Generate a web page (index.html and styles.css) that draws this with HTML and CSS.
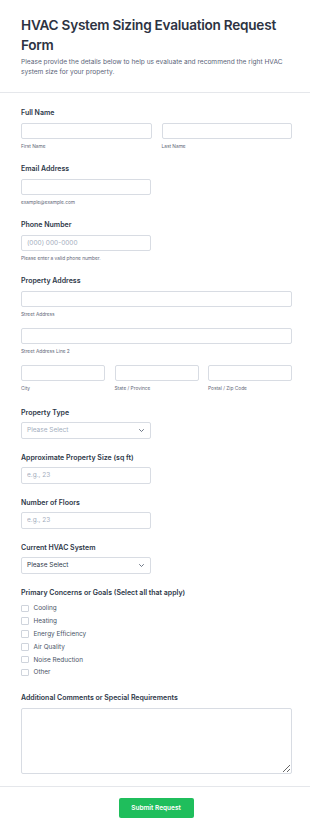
FILE: index.html
```html
<!DOCTYPE html>
<html lang="en">
<head>
<meta charset="utf-8">
<title>HVAC System Sizing Evaluation Request Form</title>
<link rel="stylesheet" href="styles.css">
</head>
<body>
<div class="page">
  <header class="header">
    <h1 class="title">HVAC System Sizing Evaluation Request Form</h1>
    <p class="desc">Please provide the details below to help us evaluate and recommend the right HVAC system size for your property.</p>
  </header>
  <form class="form">
    <div class="field">
      <div class="label">Full Name</div>
      <div class="row two">
        <div class="cell"><input class="input" type="text"><div class="sub">First Name</div></div>
        <div class="cell"><input class="input" type="text"><div class="sub">Last Name</div></div>
      </div>
    </div>
    <div class="field">
      <div class="label">Email Address</div>
      <input class="input half" type="text">
      <div class="sub">example@example.com</div>
    </div>
    <div class="field">
      <div class="label">Phone Number</div>
      <input class="input half" type="text" placeholder="(000) 000-0000">
      <div class="sub">Please enter a valid phone number.</div>
    </div>
    <div class="field address">
      <div class="label">Property Address</div>
      <div class="stack">
        <div class="cell"><input class="input" type="text"><div class="sub">Street Address</div></div>
        <div class="cell"><input class="input" type="text"><div class="sub">Street Address Line 2</div></div>
        <div class="row three">
          <div class="cell"><input class="input" type="text"><div class="sub">City</div></div>
          <div class="cell"><input class="input" type="text"><div class="sub">State / Province</div></div>
          <div class="cell"><input class="input" type="text"><div class="sub">Postal / Zip Code</div></div>
        </div>
      </div>
    </div>
    <div class="field">
      <div class="label">Property Type</div>
      <div class="select half placeholder"><span>Please Select</span>
        <svg class="chev" viewBox="0 0 10 6" width="5" height="3"><path d="M1 1l4 4 4-4" fill="none" stroke="#4a5568" stroke-width="1.6" stroke-linecap="round" stroke-linejoin="round"/></svg>
      </div>
    </div>
    <div class="field">
      <div class="label">Approximate Property Size (sq ft)</div>
      <input class="input half" type="text" placeholder="e.g., 23">
    </div>
    <div class="field">
      <div class="label">Number of Floors</div>
      <input class="input half" type="text" placeholder="e.g., 23">
    </div>
    <div class="field">
      <div class="label">Current HVAC System</div>
      <div class="select half"><span>Please Select</span>
        <svg class="chev" viewBox="0 0 10 6" width="5" height="3"><path d="M1 1l4 4 4-4" fill="none" stroke="#4a5568" stroke-width="1.6" stroke-linecap="round" stroke-linejoin="round"/></svg>
      </div>
    </div>
    <div class="field">
      <div class="label">Primary Concerns or Goals (Select all that apply)</div>
      <div class="checks">
        <div class="check"><span class="box"></span>Cooling</div>
        <div class="check"><span class="box"></span>Heating</div>
        <div class="check"><span class="box"></span>Energy Efficiency</div>
        <div class="check"><span class="box"></span>Air Quality</div>
        <div class="check"><span class="box"></span>Noise Reduction</div>
        <div class="check"><span class="box"></span>Other</div>
      </div>
    </div>
    <div class="field">
      <div class="label">Additional Comments or Special Requirements</div>
      <textarea class="textarea"></textarea>
    </div>
  </form>
  <footer class="footer">
    <button class="submit" type="button">Submit Request</button>
  </footer>
</div>
</body>
</html>
```
FILE: styles.css
```css
* { box-sizing: border-box; }
html, body { margin: 0; padding: 0; background: #fff; }
body { font-family: Inter, "Noto Sans", sans-serif; color: #2d3748; }
.page { width: 310px; }
.header {
  padding: 16px 10px 15.5px 21px;
  border-bottom: 1px solid #e5e7eb;
}
.title {
  margin: 0;
  font-size: 13.6px;
  line-height: 19.5px;
  font-weight: 600;
  color: #2d3342;
  letter-spacing: -0.25px;
}
.desc {
  margin: 1.5px 0 0;
  font-size: 6.6px;
  line-height: 10px;
  color: #5a6478;
  padding-right: 8px;
}
.form {
  padding: 15px 18px 12px 21px;
  display: flex;
  flex-direction: column;
  gap: 14px;
}
.field { display: flex; flex-direction: column; }
.field.address { margin-bottom: 1.5px; }
.label {
  font-size: 7px;
  line-height: 10px;
  font-weight: 600;
  color: #2d3748;
  margin-bottom: 4.5px;
}
.row { display: grid; }
.row.two { grid-template-columns: 1fr 1fr; column-gap: 10px; }
.row.three { grid-template-columns: 1fr 1fr 1fr; column-gap: 9.5px; }
.stack { display: flex; flex-direction: column; gap: 9.5px; }
.cell { display: flex; flex-direction: column; }
.input {
  display: block;
  width: 100%;
  height: 16.5px;
  margin: 0;
  padding: 0 5px;
  border: 1px solid #d8dce3;
  border-radius: 2px;
  background: #fff;
  font-family: inherit;
  font-size: 6.5px;
  color: #2d3748;
  outline: none;
}
.input::placeholder { color: #a4adbd; }
.half { width: 130px; }
.sub {
  margin-top: 4px;
  font-size: 4.8px;
  line-height: 7px;
  color: #5f6878;
}
.select {
  height: 16.5px;
  border: 1px solid #d8dce3;
  border-radius: 2px;
  display: flex;
  align-items: center;
  justify-content: space-between;
  padding: 0 6px 0 5px;
  font-size: 6.5px;
  color: #2d3748;
}
.select.placeholder { color: #a4adbd; }
.chev { display: block; }
.checks { display: flex; flex-direction: column; margin-top: 0; }
.check {
  display: flex;
  align-items: center;
  height: 12.8px;
  font-size: 6.4px;
  color: #4a5568;
}
.box {
  width: 7.5px;
  height: 7.5px;
  border: 1px solid #cfd4dc;
  border-radius: 1px;
  margin-right: 5px;
  background: #fff;
}
.textarea {
  display: block;
  width: 100%;
  height: 66px;
  margin: 1px 0 0;
  border: 1px solid #d8dce3;
  border-radius: 2px;
  resize: vertical;
  font-family: inherit;
  outline: none;
}
.footer {
  border-top: 1px solid #e5e7eb;
  padding: 11px 0 16px;
  display: flex;
  justify-content: center;
}
.submit {
  width: 75px;
  height: 20px;
  margin-left: 2px;
  border: none;
  border-radius: 2px;
  background: #1fbe5c;
  color: #fff;
  font-family: inherit;
  font-size: 6.5px;
  font-weight: 600;
  padding: 0;
}
```
